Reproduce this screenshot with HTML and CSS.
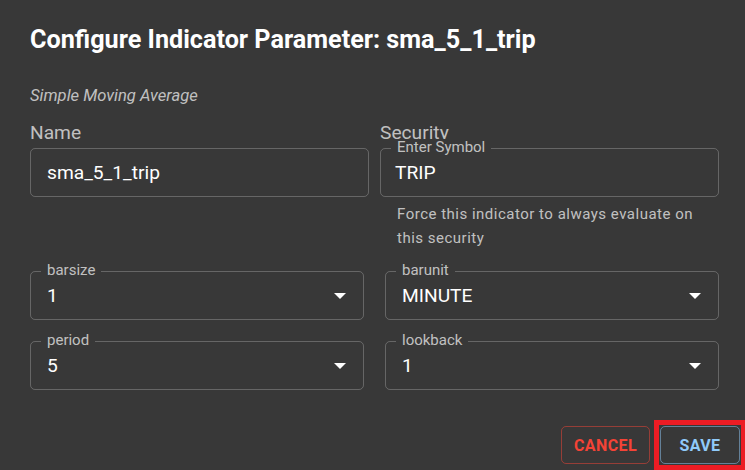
FILE: index.html
```html
<!DOCTYPE html>
<html lang="en">
<head>
<meta charset="utf-8">
<title>Configure Indicator Parameter</title>
<link rel="stylesheet" href="styles.css">
</head>
<body>
<div class="dialog">
  <h2 class="title">Configure Indicator Parameter: sma_5_1_trip</h2>
  <div class="content">
    <p class="desc">Simple Moving Average</p>
    <div class="row1">
      <div class="col">
        <div class="lbl">Name</div>
        <div class="field name-field"><span class="val">sma_5_1_trip</span></div>
      </div>
      <div class="col">
        <div class="lbl">Security</div>
        <div class="field sec-field"><span class="legend">Enter Symbol</span><span class="val">TRIP</span></div>
        <p class="helper">Force this indicator to always evaluate on this security</p>
      </div>
    </div>
    <div class="selects">
      <div class="field select"><span class="legend">barsize</span><span class="val">1</span><svg class="arrow" width="12" height="6" viewBox="0 0 12 6"><polygon points="0,0 12,0 6,6"/></svg></div>
      <div class="field select"><span class="legend">barunit</span><span class="val">MINUTE</span><svg class="arrow" width="12" height="6" viewBox="0 0 12 6"><polygon points="0,0 12,0 6,6"/></svg></div>
      <div class="field select"><span class="legend">period</span><span class="val">5</span><svg class="arrow" width="12" height="6" viewBox="0 0 12 6"><polygon points="0,0 12,0 6,6"/></svg></div>
      <div class="field select"><span class="legend">lookback</span><span class="val">1</span><svg class="arrow" width="12" height="6" viewBox="0 0 12 6"><polygon points="0,0 12,0 6,6"/></svg></div>
    </div>
  </div>
  <div class="actions">
    <button class="btn cancel">Cancel</button>
    <button class="btn save">Save</button>
  </div>
</div>
</body>
</html>
```

FILE: styles.css
```css
* { box-sizing: border-box; }
html, body {
  margin: 0;
  padding: 0;
  background: #383838;
}
body {
  width: 745px;
  height: 470px;
  overflow: hidden;
  font-family: Roboto, "Liberation Sans", sans-serif;
  color: #fff;
}
.dialog {
  width: 745px;
  height: 470px;
  background: #383838;
  display: flex;
  flex-direction: column;
}
.title {
  margin: 0;
  padding: 21px 0 0 30px;
  font-size: 25.2px;
  font-weight: 700;
  line-height: 38px;
  color: #fff;
}
.content {
  padding: 0 26px 0 30px;
}
.desc {
  margin: 25px 0 0;
  font-size: 16.6px;
  font-style: italic;
  line-height: 24px;
  color: rgba(255,255,255,0.7);
}
.row1 {
  margin-top: 13px;
  display: grid;
  grid-template-columns: 1fr 1fr;
  column-gap: 11px;
  align-items: start;
}
.lbl {
  font-size: 19.2px;
  line-height: 24px;
  color: rgba(255,255,255,0.7);
  margin-bottom: 3px;
}
.field {
  position: relative;
  height: 49px;
  border: 1px solid rgba(255,255,255,0.23);
  border-radius: 5px;
  display: flex;
  align-items: center;
}
.val {
  font-size: 19.2px;
  line-height: 24px;
  color: #fff;
}
.name-field { padding-left: 16px; }
.sec-field { padding-left: 14px; }
.legend {
  position: absolute;
  top: -10px;
  left: 10px;
  padding: 0 6px;
  font-size: 15px;
  line-height: 16px;
  color: rgba(255,255,255,0.7);
  background: #383838;
}
.helper {
  margin: 5px 17px 0 17px;
  font-size: 15px;
  line-height: 24px;
  letter-spacing: 0.5px;
  color: rgba(255,255,255,0.7);
}
.selects {
  margin-top: 21px;
  display: grid;
  grid-template-columns: 1fr 1fr;
  gap: 21px;
}
.select {
  padding: 0 17px 0 16px;
  justify-content: space-between;
}
.arrow {
  fill: #fff;
  display: block;
}
.actions {
  margin-top: 36px;
  padding-right: 5px;
  display: flex;
  justify-content: flex-end;
  gap: 10px;
}
.btn {
  height: 38px;
  min-width: 80px;
  padding: 0 12px;
  background: transparent;
  border-radius: 5px;
  font-family: Roboto, "Liberation Sans", sans-serif;
  font-size: 16px;
  font-weight: 700;
  letter-spacing: 0.4px;
  text-transform: uppercase;
}
.cancel {
  color: #f44336;
  border: 1px solid rgba(244,67,54,0.5);
}
.save {
  position: relative;
  color: #90caf9;
  border: 1px solid rgba(144,202,249,0.5);
}
.save::after {
  content: "";
  position: absolute;
  inset: -7px;
  border: 5px solid #ec1c24;
}
```
